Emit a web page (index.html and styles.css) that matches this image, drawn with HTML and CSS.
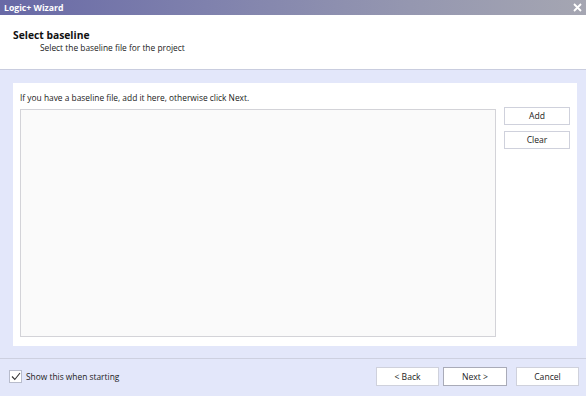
FILE: index.html
```html
<!DOCTYPE html>
<html>
<head>
<meta charset="utf-8">
<link rel="stylesheet" href="styles.css">
</head>
<body>
<div class="window">
  <div class="titlebar">
    <span class="title">Logic+ Wizard</span>
    <svg class="close" width="9" height="9" viewBox="0 0 9 9"><path d="M1 1 L8 8 M8 1 L1 8" stroke="#fff" stroke-width="1.8"/></svg>
  </div>
  <div class="header">
    <div class="h-title">Select baseline</div>
    <div class="h-sub">Select the baseline file for the project</div>
  </div>
  <div class="body">
    <div class="panel">
      <div class="intro">If you have a baseline file, add it here, otherwise click Next.</div>
      <div class="row">
        <div class="listbox"></div>
        <div class="side">
          <button class="btn side-btn">Add</button>
          <button class="btn side-btn">Clear</button>
        </div>
      </div>
    </div>
  </div>
  <div class="footer">
    <label class="check">
      <span class="box"><svg width="10" height="9" viewBox="0 0 10 9"><path d="M1 4.5 L3.8 7.5 L9 1" fill="none" stroke="#333" stroke-width="1.1"/></svg></span>
      <span>Show this when starting</span>
    </label>
    <div class="nav">
      <button class="btn nav-btn">&lt; Back</button>
      <button class="btn nav-btn next">Next &gt;</button>
      <button class="btn nav-btn cancel">Cancel</button>
    </div>
  </div>
</div>
</body>
</html>
```
FILE: styles.css
```css
* { box-sizing: border-box; }
html, body { margin: 0; padding: 0; }
body {
  width: 586px;
  height: 396px;
  overflow: hidden;
  font-family: "Open Sans", "DejaVu Sans", sans-serif;
  font-size: 8.4px;
  color: #1e1e1e;
  background: #e3e7fa;
}
.window {
  width: 586px;
  height: 396px;
  display: flex;
  flex-direction: column;
}
.titlebar {
  height: 15px;
  flex: 0 0 15px;
  background: linear-gradient(to right, #6869a6 0%, #7f81ad 35%, #9597b0 70%, #a5a6b2 100%);
  display: flex;
  align-items: center;
  justify-content: space-between;
  padding: 0 4px 0 4px;
}
.title {
  color: #fff;
  font-weight: bold;
  font-size: 8.7px;
}
.header {
  height: 55px;
  flex: 0 0 55px;
  background: #fff;
  border-bottom: 1px solid #c9cddf;
  padding: 13px 0 0 13px;
}
.h-title {
  font-weight: bold;
  font-size: 10.3px;
  line-height: 14px;
  color: #111;
}
.h-sub {
  padding-left: 27px;
  line-height: 12px;
  font-size: 8.4px;
  color: #222;
}
.body {
  flex: 0 0 289px;
  padding: 13px 11px 12px 13px;
  border-bottom: 1px solid #cdd0e0;
  display: flex;
}
.panel {
  flex: 1;
  background: #fff;
  padding: 9px 7px 9px 7px;
  display: flex;
  flex-direction: column;
}
.intro {
  font-size: 8.4px;
  line-height: 12px;
  height: 17px;
  color: #222;
}
.row {
  flex: 1;
  display: flex;
  gap: 8px;
}
.listbox {
  width: 476px;
  background: #fafafa;
  border: 1px solid #d3d3d8;
}
.side {
  display: flex;
  flex-direction: column;
  gap: 6px;
  margin-top: -2px;
}
.btn {
  font-family: "Open Sans", "DejaVu Sans", sans-serif;
  font-size: 8.6px;
  color: #222;
  background: #fff;
  border: 1px solid #cfd1dc;
  padding: 0;
  margin: 0;
}
.side-btn {
  width: 66px;
  height: 18px;
}
.footer {
  flex: 1;
  display: flex;
  align-items: center;
  justify-content: space-between;
  padding: 0 7px 2px 9px;
}
.check {
  display: flex;
  align-items: center;
  gap: 4px;
  font-size: 8.4px;
  color: #222;
}
.box {
  width: 13px;
  height: 13px;
  background: #fff;
  border: 1px solid #b8bccc;
  display: flex;
  align-items: center;
  justify-content: center;
}
.nav {
  display: flex;
}
.nav-btn {
  width: 63px;
  height: 19px;
}
.next {
  margin-left: 4px;
  width: 64px;
  border-color: #a9abb8;
}
.cancel {
  margin-left: 9px;
}
```
